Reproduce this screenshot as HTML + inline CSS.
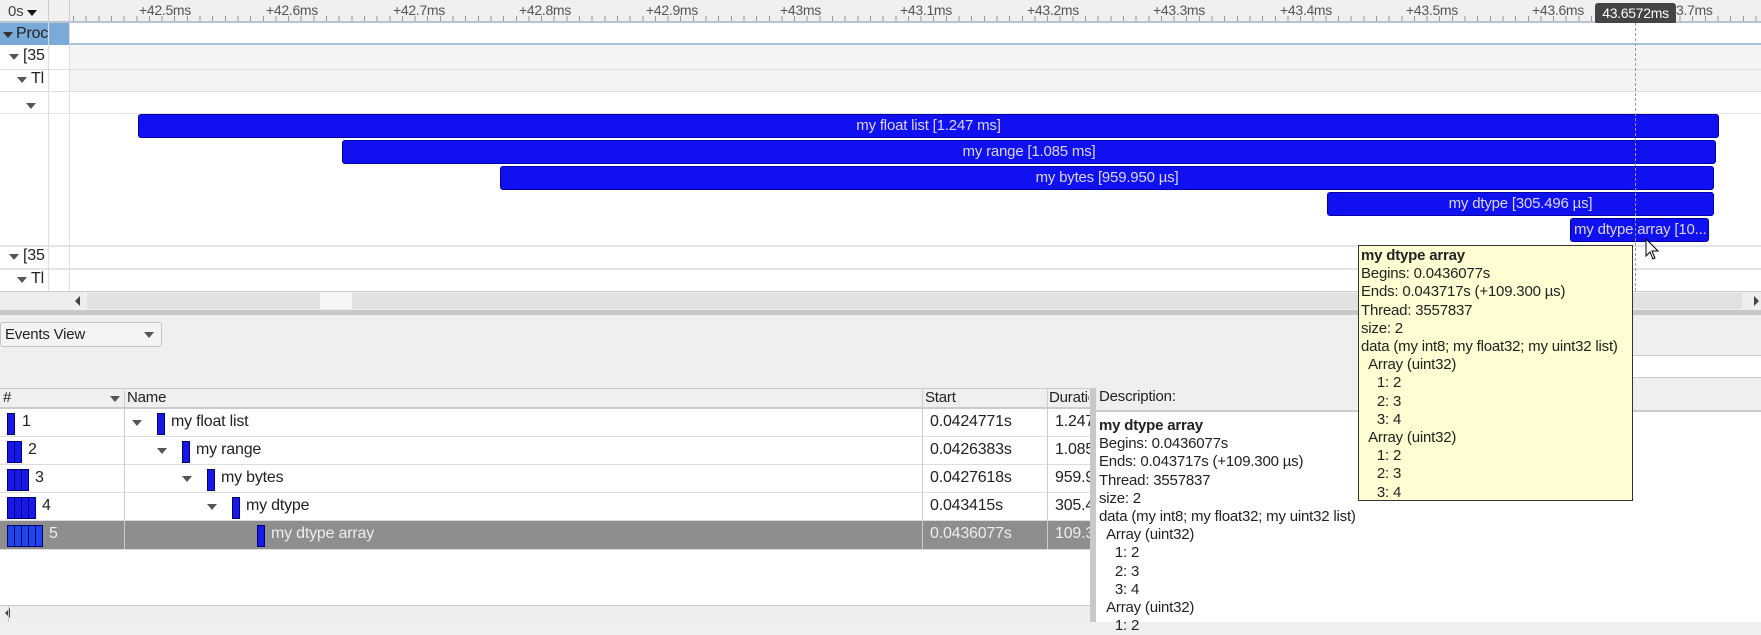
<!DOCTYPE html>
<html><head><meta charset="utf-8">
<style>
*{box-sizing:border-box;margin:0;padding:0}
body{width:1761px;height:622px;overflow:hidden;background:#efefef;font-family:"Liberation Sans",sans-serif;font-size:15px;color:#222;position:relative;letter-spacing:-0.2px}
.a{position:absolute}
.tri{display:inline-block;width:0;height:0;border-left:5px solid transparent;border-right:5px solid transparent;border-top:6px solid #555}
.bar{position:absolute;height:24px;background:#1010f0;border:1px solid #0000a8;border-radius:3px;color:#d8d8f0;text-align:center;line-height:22px;font-size:15px;white-space:nowrap;overflow:hidden}
.ic{position:absolute;height:22px;background:#1818e8;border:1px solid #000070}
.tl{position:absolute;line-height:18.2px;white-space:pre;font-size:15px}
.rl span{letter-spacing:-0.3px}
</style></head><body>
<!-- ruler -->
<div class="a" style="left:0;top:0;width:1761px;height:23px;background:#f0f0f0;border-bottom:2px solid #b8c4d0"></div>
<div class="a" style="left:69px;top:16px;width:1692px;height:5px;background:repeating-linear-gradient(90deg,#999 0 1px,transparent 1px 12.65px);background-position:4px 0"></div>
<div class="a" style="left:48px;top:0;width:1px;height:23px;background:#ccc"></div>
<div class="a" style="left:69px;top:0;width:1px;height:23px;background:#ccc"></div>
<div class="a" style="left:8px;top:3px;font-size:15px;color:#444">0s <span class="tri" style="border-top-color:#111"></span></div>
<div class="a rl" style="left:0;top:2px;width:1761px;height:18px;color:#555;font-size:14px">
<span class="a" style="left:139px">+42.5ms</span><span class="a" style="left:266px">+42.6ms</span><span class="a" style="left:393px">+42.7ms</span><span class="a" style="left:519px">+42.8ms</span><span class="a" style="left:646px">+42.9ms</span><span class="a" style="left:780px">+43ms</span><span class="a" style="left:900px">+43.1ms</span><span class="a" style="left:1027px">+43.2ms</span><span class="a" style="left:1153px">+43.3ms</span><span class="a" style="left:1280px">+43.4ms</span><span class="a" style="left:1406px">+43.5ms</span><span class="a" style="left:1532px">+43.6ms</span><span class="a" style="left:1676px">3.7ms</span></div>
<div class="a" style="left:1595px;top:3px;width:81px;height:21px;background:#444;color:#fff;border-radius:3px;text-align:center;line-height:21px;font-size:14px;letter-spacing:-0.3px">43.6572ms</div>
<!-- left columns and rows -->
<div class="a" style="left:0;top:23px;width:69px;height:22px;background:#7aabd8"></div>
<div class="a" style="left:69px;top:23px;width:1692px;height:22px;background:#fff;border-bottom:2px solid #a8c4d8"></div>
<div class="a" style="left:0;top:45px;width:69px;height:246px;background:#fff"></div>
<div class="a" style="left:69px;top:45px;width:1692px;height:47px;background:#f4f4f4"></div>
<div class="a" style="left:69px;top:92px;width:1692px;height:199px;background:#fff"></div>
<div class="a" style="left:0;top:69px;width:1761px;height:1px;background:#ddd"></div>
<div class="a" style="left:0;top:91px;width:1761px;height:1px;background:#ddd"></div>
<div class="a" style="left:0;top:113px;width:1761px;height:1px;background:#e4e4e4"></div>
<div class="a" style="left:0;top:245px;width:1761px;height:2px;background:#e4e4e4"></div>
<div class="a" style="left:0;top:268px;width:1761px;height:2px;background:#e4e4e4"></div>
<div class="a" style="left:48px;top:23px;width:1px;height:268px;background:#ddd"></div>
<div class="a" style="left:69px;top:23px;width:1px;height:268px;background:#ddd"></div>
<div class="a" style="left:0;top:25px;font-size:16px"><span class="tri" style="border-top-color:#333;margin:0 3px"></span>Proc</div>
<div class="a" style="left:9px;top:47px;font-size:16px"><span class="tri" style="margin-right:4px"></span>[35</div>
<div class="a" style="left:17px;top:70px;font-size:16px"><span class="tri" style="margin-right:4px"></span>Tl</div>
<div class="a" style="left:26px;top:96px"><span class="tri"></span></div>
<div class="a" style="left:9px;top:247px;font-size:16px"><span class="tri" style="margin-right:4px"></span>[35</div>
<div class="a" style="left:17px;top:270px;font-size:16px"><span class="tri" style="margin-right:4px"></span>Tl</div>
<!-- bars -->
<div class="bar" style="left:138px;top:114px;width:1581px">my float list [1.247 ms]</div>
<div class="bar" style="left:342px;top:140px;width:1374px">my range [1.085 ms]</div>
<div class="bar" style="left:500px;top:166px;width:1214px">my bytes [959.950 µs]</div>
<div class="bar" style="left:1327px;top:192px;width:387px">my dtype [305.496 µs]</div>
<div class="bar" style="left:1570px;top:218px;width:139px;text-align:left;padding-left:3px">my dtype array [10...</div>
<div class="a" style="left:1635px;top:23px;width:0;height:268px;border-left:1px dashed #999"></div>
<!-- scrollbar -->
<div class="a" style="left:0;top:291px;width:1761px;height:19px;background:#eee;border-top:1px solid #ccc"></div>
<div class="a" style="left:87px;top:293px;width:1655px;height:16px;background:#e2e2e2"></div>
<div class="a" style="left:320px;top:293px;width:32px;height:16px;background:#f6f6f6"></div>
<div class="a" style="left:75px;top:296px;width:0;height:0;border-top:5px solid transparent;border-bottom:5px solid transparent;border-right:5px solid #444"></div>
<div class="a" style="left:1754px;top:296px;width:0;height:0;border-top:5px solid transparent;border-bottom:5px solid transparent;border-left:5px solid #444"></div>
<div class="a" style="left:0;top:310px;width:1761px;height:5px;background:#c8c8c8"></div>
<!-- bottom -->
<div class="a" style="left:0;top:322px;width:162px;height:25px;background:#f4f4f4;border:1px solid #c4c4c4;border-radius:3px;padding:3px 0 0 4px;font-size:15px">Events View<span class="tri" style="position:absolute;left:143px;top:9px"></span></div>
<div class="a" style="left:1358px;top:355px;width:403px;height:23px;background:#fff;border-top:1px solid #ccc;border-bottom:1px solid #ccc"></div>
<!-- table -->
<div class="a" style="left:0;top:388px;width:1090px;height:21px;background:#efefef;border-top:1px solid #ccc;border-bottom:2px solid #ccc"></div>
<div class="a" style="left:0;top:409px;width:1090px;height:196px;background:#fff"></div>
<div class="a" style="left:0;top:521px;width:1090px;height:28px;background:#8e8e8e"></div>
<div class="a" style="left:0;top:436px;width:1090px;height:1px;background:#ddd"></div>
<div class="a" style="left:0;top:464px;width:1090px;height:1px;background:#ddd"></div>
<div class="a" style="left:0;top:492px;width:1090px;height:1px;background:#ddd"></div>
<div class="a" style="left:0;top:520px;width:1090px;height:1px;background:#ddd"></div>
<div class="a" style="left:0;top:549px;width:1090px;height:1px;background:#ddd"></div>
<div class="a" style="left:124px;top:388px;width:1px;height:161px;background:#ccc"></div>
<div class="a" style="left:922px;top:388px;width:1px;height:161px;background:#ccc"></div>
<div class="a" style="left:1047px;top:388px;width:1px;height:161px;background:#ccc"></div>
<div class="a" style="left:3px;top:389px">#</div><span class="tri a" style="left:110px;top:396px"></span>
<div class="a" style="left:127px;top:389px">Name</div>
<div class="a" style="left:925px;top:389px">Start</div>
<div class="a" style="left:1049px;top:389px;width:40px;overflow:hidden">Duration</div>
<div class="ic" style="left:7px;top:413px;width:8px"></div><div class="a" style="left:22px;top:413px;font-size:16px">1</div>
<div class="ic" style="left:7px;top:441px;width:15px;background:linear-gradient(90deg,#1818e8 6px,#000070 6px 7px,#1818e8 7px)"></div><div class="a" style="left:28px;top:441px;font-size:16px">2</div>
<div class="ic" style="left:7px;top:469px;width:22px;background:repeating-linear-gradient(90deg,#1818e8 0 6px,#000070 6px 7px)"></div><div class="a" style="left:35px;top:469px;font-size:16px">3</div>
<div class="ic" style="left:7px;top:497px;width:29px;background:repeating-linear-gradient(90deg,#1818e8 0 6px,#000070 6px 7px)"></div><div class="a" style="left:42px;top:497px;font-size:16px">4</div>
<div class="ic" style="left:7px;top:525px;width:36px;background:repeating-linear-gradient(90deg,#1e46e8 0 6px,#000070 6px 7px)"></div><div class="a" style="left:49px;top:525px;font-size:16px;color:#eee">5</div>
<span class="tri a" style="left:132px;top:420px"></span><div class="ic" style="left:157px;top:413px;width:8px"></div><div class="a" style="left:171px;top:413px;font-size:16px">my float list</div>
<span class="tri a" style="left:157px;top:448px"></span><div class="ic" style="left:182px;top:441px;width:8px"></div><div class="a" style="left:196px;top:441px;font-size:16px">my range</div>
<span class="tri a" style="left:182px;top:476px"></span><div class="ic" style="left:207px;top:469px;width:8px"></div><div class="a" style="left:221px;top:469px;font-size:16px">my bytes</div>
<span class="tri a" style="left:207px;top:504px"></span><div class="ic" style="left:232px;top:497px;width:8px"></div><div class="a" style="left:246px;top:497px;font-size:16px">my dtype</div>
<div class="ic" style="left:257px;top:525px;width:8px"></div><div class="a" style="left:271px;top:525px;font-size:16px;color:#eee">my dtype array</div>
<div class="a" style="left:930px;top:413px;font-size:16px">0.0424771s</div><div class="a" style="left:1055px;top:413px;font-size:16px">1.247</div>
<div class="a" style="left:930px;top:441px;font-size:16px">0.0426383s</div><div class="a" style="left:1055px;top:441px;font-size:16px">1.085</div>
<div class="a" style="left:930px;top:469px;font-size:16px">0.0427618s</div><div class="a" style="left:1055px;top:469px;font-size:16px">959.9</div>
<div class="a" style="left:930px;top:497px;font-size:16px">0.043415s</div><div class="a" style="left:1055px;top:497px;font-size:16px">305.4</div>
<div class="a" style="left:930px;top:525px;font-size:16px;color:#eee">0.0436077s</div><div class="a" style="left:1055px;top:525px;font-size:16px;color:#eee">109.3</div>
<div class="a" style="left:0;top:605px;width:1090px;height:17px;background:#eee;border-top:1px solid #ccc"></div>
<div class="a" style="left:5px;top:608px;width:0;height:0;border-top:5px solid transparent;border-bottom:5px solid transparent;border-right:5px solid #444"></div>
<div class="a" style="left:8px;top:606px;width:1px;height:16px;background:#ccc"></div>
<div class="a" style="left:1090px;top:388px;width:6px;height:234px;background:#c8c8c8"></div>
<!-- description -->
<div class="a" style="left:1096px;top:388px;width:665px;height:24px;background:#efefef;border-bottom:2px solid #ccc"></div>
<div class="a" style="left:1099px;top:388px">Description:</div>
<div class="a" style="left:1096px;top:412px;width:665px;height:210px;background:#fff"></div>
<div class="tl" style="left:1099px;top:417px"><b>my dtype array</b>
Begins: 0.0436077s
Ends: 0.043717s (+109.300 µs)
Thread: 3557837
size: 2
data (my int8; my float32; my uint32 list)
  Array (uint32)
    1: 2
    2: 3
    3: 4
  Array (uint32)
    1: 2</div>
<!-- tooltip -->
<div class="a" style="left:1358px;top:245px;width:275px;height:256px;background:#fefed2;border:1px solid #333"></div>
<div class="tl" style="left:1361px;top:247px"><b>my dtype array</b>
Begins: 0.0436077s
Ends: 0.043717s (+109.300 µs)
Thread: 3557837
size: 2
data (my int8; my float32; my uint32 list)
  Array (uint32)
    1: 2
    2: 3
    3: 4
  Array (uint32)
    1: 2
    2: 3
    3: 4</div>
<!-- cursor -->
<svg class="a" style="left:1645px;top:238px" width="16" height="24" viewBox="0 0 16 24"><path d="M1 1 L1 18 L5 14 L8 21 L10 20 L7 13 L13 13 Z" fill="#fff" stroke="#000" stroke-width="1"/></svg>
</body></html>
